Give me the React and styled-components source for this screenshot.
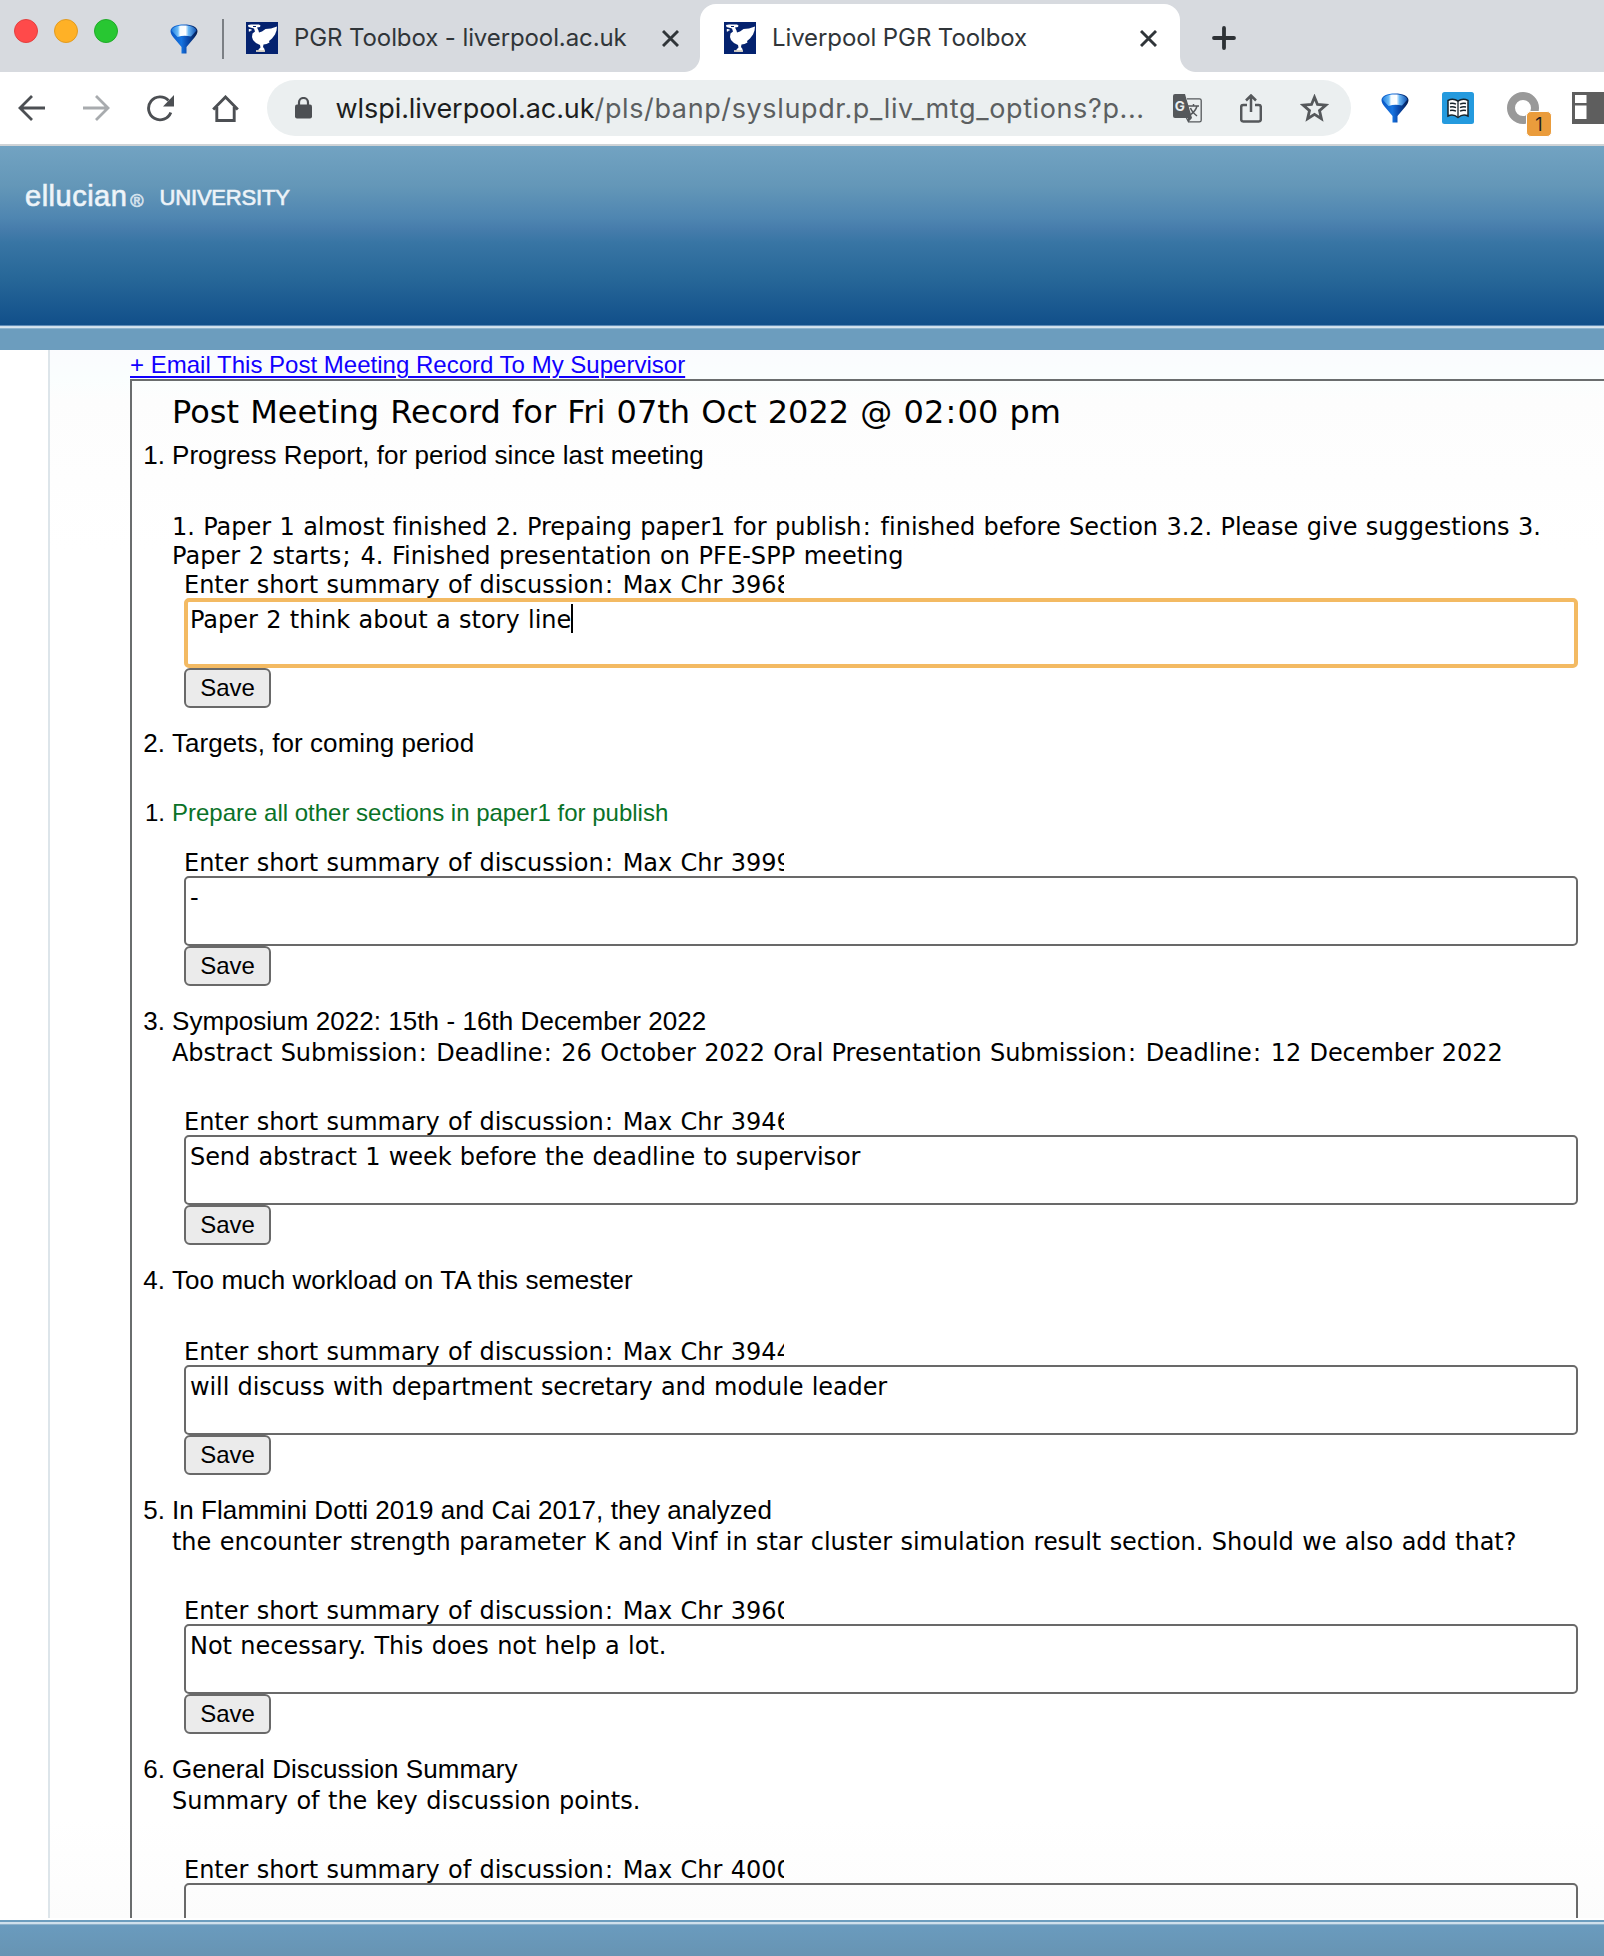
import React from 'react';
import styled, { createGlobalStyle, css } from 'styled-components';

const VERDANA = '"DejaVu Sans", Verdana, sans-serif';
const ARIAL = '"Liberation Sans", Arial, sans-serif';
const UI = 'Inter, "Open Sans", sans-serif';

const Global = createGlobalStyle`
  * { box-sizing: border-box; }
  body { margin: 0; background: #fff; overflow: hidden; }
  svg { display: block; flex: none; }
`;

const Window = styled.div`
  width: 1604px;
  height: 1956px;
  display: flex;
  flex-direction: column;
  overflow: hidden;
  color: #000;
  background: #fff;
`;

/* ---------- browser chrome ---------- */

const TabStrip = styled.div`
  flex: none;
  height: 72px;
  display: flex;
  align-items: flex-start;
  background: #d7dadf;
`;

const Lights = styled.div`
  display: flex;
  gap: 16px;
  margin: 19px 0 0 14px;
`;

const Light = styled.span`
  width: 24px;
  height: 24px;
  border-radius: 50%;
  background: ${(p) => p.$fill};
  border: 1px solid ${(p) => p.$edge};
`;

const PinnedTab = styled.div`
  padding: 24px 24px 0 52px;
`;

const Separator = styled.span`
  width: 2px;
  height: 40px;
  margin: 19px 0 0;
  background: #7b7f84;
`;

const Tab = styled.div`
  position: relative;
  display: flex;
  align-items: center;
  height: ${(p) => (p.$active ? 68 : 76)}px;
  width: ${(p) => (p.$active ? 480 : 476)}px;
  margin-top: ${(p) => (p.$active ? 4 : 0)}px;
  padding: ${(p) => (p.$active ? '0 23px 0 24px' : '0 21px 0 22px')};
  ${(p) =>
    p.$active &&
    css`
      background: #fff;
      border-radius: 16px 16px 0 0;
      &::before,
      &::after {
        content: '';
        position: absolute;
        bottom: 0;
        width: 16px;
        height: 16px;
      }
      &::before {
        left: -16px;
        background: radial-gradient(circle at 0 0, transparent 15.5px, #fff 16.5px);
      }
      &::after {
        right: -16px;
        background: radial-gradient(circle at 100% 0, transparent 15.5px, #fff 16.5px);
      }
    `}
`;

const TabTitle = styled.span`
  flex: 1;
  margin-left: 16px;
  font: 400 24px/30px ${UI};
  letter-spacing: -0.1px;
  color: #303539;
  white-space: nowrap;
`;

const NewTab = styled.div`
  margin: 26px 0 0 32px;
`;

const Toolbar = styled.div`
  flex: none;
  height: 74px;
  display: flex;
  align-items: center;
  padding-left: 18px;
  border-bottom: 2px solid #cfd3d6;
  background: #fff;
`;

const NavButtons = styled.div`
  display: flex;
  align-items: center;
  gap: 37.5px;
  width: 250px;
`;

const AddressBar = styled.div`
  display: flex;
  align-items: center;
  width: 1086px;
  height: 56px;
  padding: 0 22px 0 28px;
  border-radius: 28px;
  background: #ebeff0;
`;

const Url = styled.span`
  flex: 1;
  margin-left: 23px;
  padding-top: 1px;
  font: 400 27px/34px ${UI};
  letter-spacing: 0.62px;
  color: #5c5f61;
  white-space: nowrap;
`;

const Host = styled.span`
  color: #1c1e20;
  letter-spacing: -0.05px;
`;

const PillActions = styled.div`
  display: flex;
  align-items: center;
  gap: 38px;
`;

const Extensions = styled.div`
  display: flex;
  align-items: center;
  gap: 33px;
  margin-left: 30px;
`;

const RingWrap = styled.div`
  position: relative;
  width: 32px;
  height: 32px;
`;

const Badge = styled.span`
  position: absolute;
  left: 19px;
  top: 19px;
  width: 26px;
  height: 26px;
  border: 1px solid #fff;
  border-radius: 5px;
  background: #ea9c3c;
  font: 400 18px/26px ${UI};
  color: #222;
  text-align: center;
`;

/* ---------- page ---------- */

const Banner = styled.header`
  flex: none;
  height: 179px;
  display: flex;
  align-items: flex-start;
  padding: 31px 0 0 25px;
  background: linear-gradient(
    #72a3c2 0%,
    #6497b8 22%,
    #4f86b1 40%,
    #477dac 46%,
    #3875a4 54%,
    #276798 74%,
    #114f8a 100%
  );
  color: #f1f6fa;
  font-family: ${ARIAL};
  -webkit-text-stroke: 0.7px #e6eff6;
  white-space: nowrap;
`;

const BrandName = styled.span`
  font-size: 29px;
  line-height: 38px;
  letter-spacing: 0.5px;
`;

const BrandMark = styled.span`
  margin-left: 3px;
  font-size: 18px;
  line-height: 49px;
  opacity: 0.85;
`;

const BrandSuffix = styled.span`
  margin-left: 16px;
  font-size: 22px;
  line-height: 42px;
  letter-spacing: -0.2px;
`;

const Band = styled.div`
  flex: none;
  height: 25px;
  background: linear-gradient(#5f8cb7 1px, #c9dbe9 1px, #dbe7f1 3px, #8fb4cf 3px, #8fb4cf 4px, #6c9dbe 4px);
`;

const Page = styled.main`
  flex: none;
  display: flex;
  height: 1568px;
  padding-left: 48px;
  overflow: hidden;
`;

const Content = styled.div`
  flex: 1;
  height: 1568px;
  padding-left: 80px;
  border-left: 2px solid #dde5ea;
  background: linear-gradient(#fafbfe 0, #fafefe 28px, #fdfdfd 50px, #fefefe 130px, #fff 200px, #fff 1470px, #fcfcfc 1568px);
`;

const EmailLink = styled.a`
  display: block;
  height: 29px;
  font: 400 24px/29px ${ARIAL};
  letter-spacing: 0.01px;
  color: #1100ff;
  text-decoration: underline;
  text-decoration-thickness: 2px;
  text-underline-offset: 3px;
  white-space: nowrap;
`;

const Record = styled.section`
  height: 1600px;
  padding-left: 40px;
  border: solid #6a6d6e;
  border-width: 2px 0 0 2px;
`;

const Title = styled.h1`
  margin: 0;
  padding-top: 12px;
  height: 59px;
  font: 400 32px/38px ${VERDANA};
  word-spacing: 1px;
  white-space: nowrap;
`;

const Item = styled.article`
  display: flex;
  flex-direction: column;
  align-items: flex-start;
  padding-bottom: 20px;
`;

const Heading = styled.div`
  display: flex;
  height: 30px;
  margin-left: -40px;
  font: 400 ${(p) => (p.$small ? 24 : 26)}px/30px ${ARIAL};
  letter-spacing: ${(p) => (p.$small ? 0 : 0.06)}px;
  color: ${(p) => p.$color || '#000'};
  white-space: nowrap;
`;

const Marker = styled.span`
  width: 40px;
  padding-right: 7px;
  text-align: right;
  color: #000;
`;

const bodyFont = css`
  font: 400 24px/28px ${VERDANA};
  letter-spacing: ${(p) => p.$spacing ?? -0.03}px;
  word-spacing: 0.8px;
  white-space: nowrap;
`;

const Text = styled.p`
  margin: ${(p) => p.$top || 0}px 0 0;
  height: 29px;
  ${bodyFont}
`;

const Wide = styled.span`
  padding: 0 1.3px;
`;

const Spacer = styled.div`
  height: ${(p) => p.$h}px;
`;

const Label = styled.div`
  width: 600px;
  height: 27px;
  margin-left: 12px;
  overflow: hidden;
  ${bodyFont}
`;

const Field = styled.div`
  display: flex;
  width: 1394px;
  height: 70px;
  margin-left: 12px;
  padding: ${(p) => (p.$focused ? '4px 2px' : '6px 4px')};
  border: ${(p) => (p.$focused ? '4px solid #f3ba63' : '2px solid #696969')};
  border-radius: 5px;
  background: transparent;
  ${bodyFont}
`;

const Caret = styled.span`
  width: 2px;
  height: 29px;
  margin-top: -2px;
  background: #000;
`;

const SaveButton = styled.button`
  width: 87px;
  height: 40px;
  margin: 0 0 0 12px;
  padding: 0;
  border: 2px solid #696969;
  border-radius: 6px;
  background: #ebebeb;
  color: #000;
  font: 400 24px/34px ${ARIAL};
`;

const Footer = styled.footer`
  flex: none;
  height: 38px;
  border-top: 2px solid #fff;
  background: linear-gradient(#6c9dbe 0, #6c9dbe 2px, #cfe0ec 2px, #cfe0ec 4px, #8fb2cb 4px, #8fb2cb 5px, #6a9bbe 5px, #6794b3 100%);
`;

/* ---------- icons ---------- */

const Funnel = ({ id }) => (
  <svg width="28" height="30" viewBox="0 0 28 30">
    <defs>
      <linearGradient id={id} x1="0" x2="1">
        <stop offset="0" stopColor="#0a56c4" />
        <stop offset="0.4" stopColor="#1674e0" />
        <stop offset="0.62" stopColor="#0a4cb0" />
        <stop offset="1" stopColor="#021a4d" />
      </linearGradient>
      <linearGradient id={`${id}Rim`} x1="0" x2="1">
        <stop offset="0" stopColor="#1f7fe0" />
        <stop offset="0.26" stopColor="#6fbdf8" />
        <stop offset="0.34" stopColor="#f4fbff" />
        <stop offset="0.56" stopColor="#ffffff" />
        <stop offset="0.68" stopColor="#6bb8f6" />
        <stop offset="1" stopColor="#0e4fb0" />
      </linearGradient>
    </defs>
    <path d="M.5 7C.5 3.200 6 .5 14 .5s13.500 2.700 13.500 6.500c0 2.500-1.500 4.500-3 6.500L16.500 23v6.500h-5V23L3.500 13.500C2 11.500.5 9.500.5 7z" fill={`url(#${id})`} />
    <path d="M1.500 6.500C2.500 3.300 7 1.500 14 1.500s11.500 1.800 12.500 5l-5.500 6q-7-1.800-13.500.5z" fill={`url(#${id}Rim)`} />
  </svg>
);

const LiverBird = () => (
  <svg width="32" height="32" viewBox="0 0 32 32">
    <rect width="32" height="32" fill="#04226f" />
    <path
      d="M2 3 5 2.500h8l1.500 1-.5 1.500-3 .5 1.500 3 .5 2 3-1 3.500-2.500L25 6.500l6-2-.5 4-1.500 4-3 4-3 2.500.5 1.500-3 1.500-3 .5-.5 2.500 1.500 2v2.500h-6v-2l2-2-.5-2.500-4-2-3-3L6 15l.5-3.500L9 9.500 8 6.500 2.500 5z"
      fill="#fff"
    />
    <path d="M3 8h2.500M3.500 9.500V7" stroke="#fff" strokeWidth="1.400" />
    <path d="M10 29h9" stroke="#d8d2c4" strokeWidth="1.800" />
    <path d="M7 4.500h3" stroke="#04226f" strokeWidth="1" />
  </svg>
);

const Cross = () => (
  <svg width="17" height="17" viewBox="0 0 17 17" fill="none" stroke="#303539" strokeWidth="2.900">
    <path d="M1 1l15 15M16 1L1 16" />
  </svg>
);

const Plus = () => (
  <svg width="24" height="24" viewBox="0 0 24 24" stroke="#2d3135" strokeWidth="3.800" strokeLinecap="round">
    <path d="M12 2v20M2 12h20" />
  </svg>
);

const Arrow = ({ flip, color }) => (
  <svg width="27" height="26" viewBox="0 0 27 26" fill="none" stroke={color} strokeWidth="2.800">
    <path d={flip ? 'M0 13h25M13 1l12 12-12 12' : 'M27 13H2M14 1L2 13l12 12'} />
  </svg>
);

const Reload = () => (
  <svg width="27" height="27" viewBox="0 0 27 27">
    <path d="M23.800 17.500A11.500 11.500 0 1 1 21.500 5.500" fill="none" stroke="#4c4f53" strokeWidth="2.900" />
    <path d="M27 0v11.500H16z" fill="#4c4f53" />
  </svg>
);

const Home = () => (
  <svg width="27" height="27" viewBox="0 0 27 27" fill="none" stroke="#4c4f53" strokeWidth="2.900">
    <path d="M1.200 14.500 13.500 2l12.300 12.500M4.800 12v13.500h17.400V12" />
  </svg>
);

const Lock = () => (
  <svg width="17" height="22" viewBox="0 0 17 22">
    <rect x="0" y="7.500" width="17" height="14" rx="2" fill="#4c4f53" />
    <path d="M4 8V5.500a4.500 4.500 0 0 1 9 0V8" fill="none" stroke="#4c4f53" strokeWidth="2.200" />
  </svg>
);

const GLetter = styled.text`
  font: 700 13.5px ${UI};
  fill: #ebeff0;
`;

const Translate = () => (
  <svg width="29" height="29" viewBox="0 0 29 29">
    <path d="M14 4.800h12.500a1.700 1.700 0 0 1 1.700 1.700v19.700a1.700 1.700 0 0 1-1.700 1.700H15.500l-2.500-5" fill="none" stroke="#55585b" strokeWidth="1.300" />
    <path d="M2 0h10l7 24H2a2 2 0 0 1-2-2V2a2 2 0 0 1 2-2z" fill="#55585b" />
    <path d="M15 24h4l-4 4.500z" fill="#55585b" />
    <path d="M15 12h11M20.500 10v2M24 12c-1 4-4 7-7 9M17.500 14c1 3 4 6 6.500 8" fill="none" stroke="#55585b" strokeWidth="1.500" />
    <GLetter x="1.800" y="16.500">G</GLetter>
  </svg>
);

const Share = () => (
  <svg width="22" height="29" viewBox="0 0 22 29" fill="none" stroke="#55585b" strokeWidth="2.500">
    <path d="M7 11H3.200A2 2 0 0 0 1.200 13v12.500a2 2 0 0 0 2 2h15.600a2 2 0 0 0 2-2V13a2 2 0 0 0-2-2H15M11 18V2M6 6.500l5-5 5 5" />
  </svg>
);

const Star = () => (
  <svg width="29" height="28" viewBox="0 0 29 28" fill="none" stroke="#55585b" strokeWidth="2.800" strokeLinejoin="miter">
    <path d="M14.500 3.200l3 7.300 8.200.7-6.200 5.400 1.900 8.100-6.900-4.300-6.900 4.300 1.900-8.100-6.200-5.400 8.200-.7z" />
  </svg>
);

const Book = () => (
  <svg width="32" height="32" viewBox="0 0 32 32">
    <rect width="32" height="32" rx="2.500" fill="#249ade" />
    <path d="M6 8.500C9 7 13 7.200 16 9c3-1.800 7-2 10-.5V24c-3-1.500-7-1-10 1.500C13 23 9 22.500 6 24z" fill="#fff" stroke="#16232b" strokeWidth="1.500" />
    <path d="M16 9v16M8 11.500c2-.500 4-.300 6 .700M8 15c2-.500 4-.300 6 .700M8 18.500c2-.500 4-.300 6 .700M24 11.500c-2-.500-4-.300-6 .700M24 15c-2-.500-4-.300-6 .700M24 18.500c-2-.500-4-.300-6 .700" fill="none" stroke="#16232b" strokeWidth="1.300" />
  </svg>
);

const Ring = () => (
  <svg width="32" height="32" viewBox="0 0 32 32">
    <circle cx="16" cy="16" r="12" fill="none" stroke="#999" strokeWidth="8" />
  </svg>
);

const SidePanel = () => (
  <svg width="32" height="32" viewBox="0 0 32 32">
    <rect width="32" height="32" fill="#5e5e5e" />
    <path d="M3 3h11.500v8H3zM3 13.500h11.500V27H3z" fill="#fff" />
  </svg>
);

/* ---------- content ---------- */

const items = [
  {
    heading: 'Progress Report, for period since last meeting',
    gap: 43,
    body: [
      {
        text: '1. Paper 1 almost finished 2. Prepaing paper1 for publish: finished before Section 3.2. Please give suggestions 3.',
        spacing: -0.025,
      },
      { text: 'Paper 2 starts; 4. Finished presentation on PFE-SPP meeting', spacing: 0.05 },
    ],
    left: '3968',
    value: 'Paper 2 think about a story line',
    focused: true,
  },
  {
    heading: 'Targets, for coming period',
    gap: 40,
    target: 'Prepare all other sections in paper1 for publish',
    left: '3999',
    value: '-',
  },
  {
    heading: 'Symposium 2022: 15th - 16th December 2022',
    sub: 'Abstract Submission: Deadline: 26 October 2022 Oral Presentation Submission: Deadline: 12 December 2022',
    subSpacing: -0.06,
    gap: 40,
    left: '3946',
    value: 'Send abstract 1 week before the deadline to supervisor',
    valueSpacing: -0.08,
  },
  {
    heading: 'Too much workload on TA this semester',
    gap: 43,
    left: '3944',
    value: 'will discuss with department secretary and module leader',
    valueSpacing: -0.11,
  },
  {
    heading: 'In Flammini Dotti 2019 and Cai 2017, they analyzed',
    sub: 'the encounter strength parameter K and Vinf in star cluster simulation result section. Should we also add that?',
    subSpacing: -0.04,
    gap: 40,
    left: '3960',
    value: 'Not necessary. This does not help a lot.',
  },
  {
    heading: 'General Discussion Summary',
    sub: 'Summary of the key discussion points.',
    subSpacing: 0,
    gap: 40,
    left: '4000',
    value: '',
    open: true,
  },
];

const Words = ({ children }) =>
  children.split(/([:;])/).map((part, i) => (i % 2 ? <Wide key={i}>{part}</Wide> : part));

const MeetingItem = ({ item, number }) => (
  <Item>
    <Heading>
      <Marker>{number}.</Marker>
      {item.heading}
    </Heading>
    {item.sub && (
      <Text $top={3} $spacing={item.subSpacing}>
        <Words>{item.sub}</Words>
      </Text>
    )}
    <Spacer $h={item.gap} />
    {item.body &&
      item.body.map((line) => (
        <Text key={line.text} $spacing={line.spacing}>
          <Words>{line.text}</Words>
        </Text>
      ))}
    {item.target && (
      <>
        <Heading $small $color="#0a7227">
          <Marker>1.</Marker>
          {item.target}
        </Heading>
        <Spacer $h={21} />
      </>
    )}
    <Label>
      <Words>{`Enter short summary of discussion: Max Chr ${item.left}`}</Words>
    </Label>
    <Field $focused={item.focused} $spacing={item.valueSpacing}>
      {item.value}
      {item.focused && <Caret />}
    </Field>
    {!item.open && <SaveButton>Save</SaveButton>}
  </Item>
);

export default function App() {
  return (
    <Window>
      <Global />
      <TabStrip>
        <Lights>
          <Light $fill="#ff4a4a" $edge="#e3403f" />
          <Light $fill="#ffb126" $edge="#e29b20" />
          <Light $fill="#28c732" $edge="#20ab29" />
        </Lights>
        <PinnedTab>
          <Funnel id="funnelTab" />
        </PinnedTab>
        <Separator />
        <Tab>
          <LiverBird />
          <TabTitle>PGR Toolbox - liverpool.ac.uk</TabTitle>
          <Cross />
        </Tab>
        <Tab $active>
          <LiverBird />
          <TabTitle>Liverpool PGR Toolbox</TabTitle>
          <Cross />
        </Tab>
        <NewTab>
          <Plus />
        </NewTab>
      </TabStrip>
      <Toolbar>
        <NavButtons>
          <Arrow color="#4c4f53" />
          <Arrow flip color="#a8abae" />
          <Reload />
          <Home />
        </NavButtons>
        <AddressBar>
          <Lock />
          <Url>
            <Host>wlspi.liverpool.ac.uk</Host>/pls/banp/syslupdr.p_liv_mtg_options?p...
          </Url>
          <PillActions>
            <Translate />
            <Share />
            <Star />
          </PillActions>
        </AddressBar>
        <Extensions>
          <Funnel id="funnelExt" />
          <Book />
          <RingWrap>
            <Ring />
            <Badge>1</Badge>
          </RingWrap>
          <SidePanel />
        </Extensions>
      </Toolbar>
      <Banner>
        <BrandName>ellucian</BrandName>
        <BrandMark>®</BrandMark>
        <BrandSuffix>UNIVERSITY</BrandSuffix>
      </Banner>
      <Band />
      <Page>
        <Content>
          <EmailLink>+ Email This Post Meeting Record To My Supervisor</EmailLink>
          <Record>
            <Title>
              <Words>Post Meeting Record for Fri 07th Oct 2022 @ 02:00 pm</Words>
            </Title>
            {items.map((item, i) => (
              <MeetingItem key={item.heading} item={item} number={i + 1} />
            ))}
          </Record>
        </Content>
      </Page>
      <Footer />
    </Window>
  );
}
